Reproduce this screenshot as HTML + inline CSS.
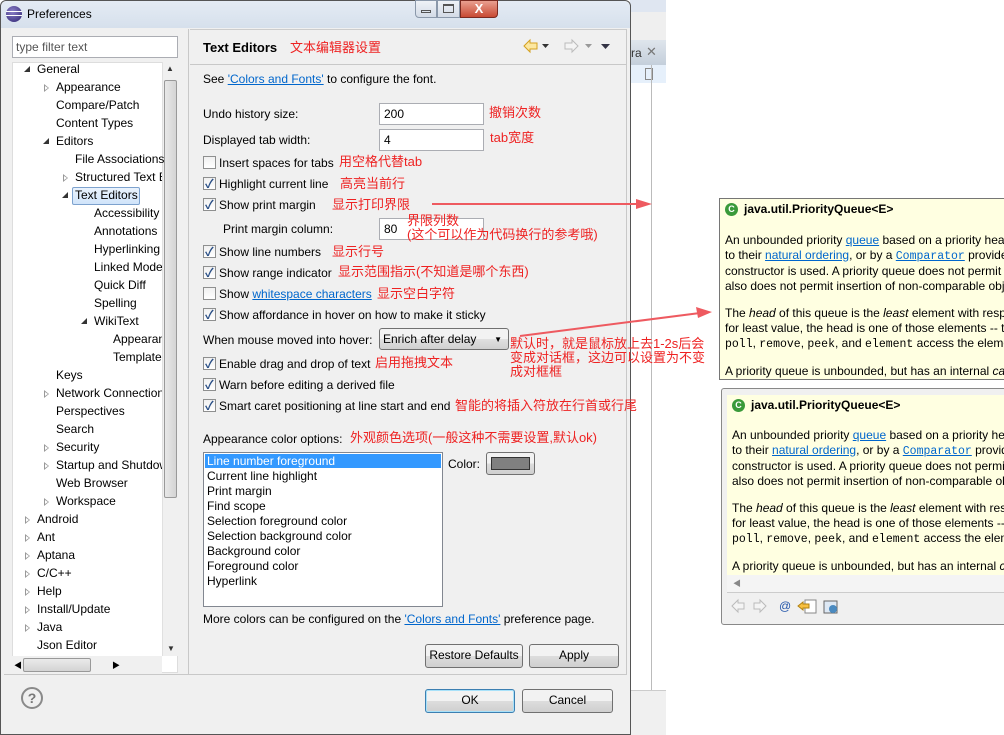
<!DOCTYPE html>
<html><head><meta charset="utf-8"><style>
*{margin:0;padding:0;box-sizing:border-box}
body{width:1004px;height:735px;position:relative;overflow:hidden;background:#fff;font-family:"Liberation Sans","Noto Sans CJK SC",sans-serif;font-size:12px;color:#000}
.a{position:absolute;white-space:nowrap}
.r{position:absolute;white-space:nowrap;color:#ee2222;font-family:"Liberation Sans","Noto Sans CJK SC",sans-serif;font-size:13px;line-height:14px}
.t{position:absolute;white-space:nowrap;line-height:14px}
.tri{position:absolute;width:0;height:0}
.op{border-left:5px solid #999;border-top:4px solid transparent;border-bottom:4px solid transparent}
.op:after{content:"";position:absolute;left:-4px;top:-2px;border-left:3px solid #fff;border-top:2px solid transparent;border-bottom:2px solid transparent}
.ex{border-right:6px solid #333;border-top:6px solid transparent}
.cb{position:absolute;width:13px;height:13px;border:1px solid #8e8f8f;background:linear-gradient(#f0f0f0,#fff)}
.cb.on:after{content:"✓";position:absolute;left:1px;top:-3px;font-size:12px;color:#2a4f86;font-weight:bold}
.in{position:absolute;background:#fff;border:1px solid #abadb3;padding:3px 4px;line-height:14px}
.btn{position:absolute;border:1px solid #707070;border-radius:3px;background:linear-gradient(#f2f2f2 50%,#dddddd 50%,#cfcfcf);text-align:center;line-height:21px}
a,.lk{color:#0066cc;text-decoration:underline}
.tip{position:absolute;background:#ffffe1;font-size:12px;line-height:15px;overflow:hidden}
.tip p{white-space:nowrap;margin-bottom:12px}
.mono{font-family:"Liberation Mono",monospace;font-size:11.5px}
</style></head><body>

<div class="a" style="left:630px;top:0;width:36px;height:12px;background:#dfe6f1"></div>
<div class="a" style="left:630px;top:12px;width:36px;height:28px;background:#efefef"></div>
<div class="a" style="left:630px;top:40px;width:36px;height:25px;background:linear-gradient(#dfe5ec,#c4cfdb)"></div>
<div class="a" style="left:631px;top:46px;color:#333">ra</div>
<div class="a" style="left:646px;top:44px;color:#777;font-size:13px">✕</div>
<div class="a" style="left:630px;top:65px;width:36px;height:18px;background:#e6f0fb"></div>
<div class="a" style="left:645px;top:68px;width:8px;height:12px;border:1px solid #888"></div>
<div class="a" style="left:651px;top:65px;width:1px;height:625px;background:#bbb"></div>
<div class="a" style="left:630px;top:690px;width:36px;height:45px;background:#f0f0f0;border-top:1px solid #ccc"></div>

<div class="a" style="left:0;top:0;width:631px;height:735px;background:#f0f0f0;border:1px solid #555;border-radius:6px 6px 0 0"></div>
<div class="a" style="left:1px;top:1px;width:629px;height:27px;background:linear-gradient(#e4ebf4,#d6e0ec);border-radius:6px 6px 0 0"></div>
<div class="a" style="left:6px;top:6px;width:16px;height:16px;border-radius:50%;background:radial-gradient(circle at 40% 35%,#8b7fc8,#2c2270)"></div>
<div class="a" style="left:6px;top:11px;width:16px;height:1px;background:#fff"></div>
<div class="a" style="left:6px;top:15px;width:16px;height:1px;background:#fff"></div>
<div class="a" style="left:27px;top:7px;font-size:12px">Preferences</div>
<div class="a" style="left:415px;top:0;width:22px;height:18px;border:1px solid #8a98aa;border-radius:0 0 0 4px;background:linear-gradient(#eef2f7,#d3dbe6)"></div>
<div class="a" style="left:421px;top:10px;width:10px;height:3px;border:1px solid #555"></div>
<div class="a" style="left:437px;top:0;width:23px;height:18px;border:1px solid #8a98aa;background:linear-gradient(#eef2f7,#d3dbe6)"></div>
<div class="a" style="left:443px;top:4px;width:11px;height:9px;border:1px solid #555;border-top-width:2px"></div>
<div class="a" style="left:460px;top:0;width:38px;height:18px;border:1px solid #7a2a20;border-radius:0 0 4px 0;background:linear-gradient(#e9a090,#c84a34);color:#fff;text-align:center;font-weight:bold;line-height:16px;font-size:13px">X</div>

<div class="in" style="left:12px;top:36px;width:166px;height:22px;padding:3px 3px;color:#555">type filter text</div>
<div class="a" style="left:12px;top:62px;width:166px;height:611px;background:#fff;border:1px solid #ddd"></div>
<div class="a" style="left:162px;top:62px;width:16px;height:594px;background:#f0f0f0;border-left:1px solid #e0e0e0"></div>
<div class="a" style="left:164px;top:80px;width:13px;height:418px;border:1px solid #999;border-radius:2px;background:linear-gradient(90deg,#e8e8e8,#d4d4d4)"></div>
<div class="a" style="left:166px;top:64px;font-size:8px;color:#333">▲</div>
<div class="a" style="left:167px;top:644px;font-size:8px;color:#333">▼</div>
<div class="a" style="left:12px;top:656px;width:150px;height:17px;background:#f0f0f0"></div>
<div class="a" style="left:23px;top:658px;width:68px;height:14px;border:1px solid #999;border-radius:2px;background:linear-gradient(#eaeaea,#d4d4d4)"></div>
<div class="a" style="left:14px;top:660px;font-size:8px">◀</div>
<div class="a" style="left:112px;top:660px;font-size:8px">▶</div>
<div class="a" style="left:188px;top:29px;width:1px;height:645px;background:#c8c8c8"></div>

<div class="tri ex" style="left:24px;top:66px"></div><div class="t" style="left:37px;top:62px">General</div>
<div class="tri op" style="left:44px;top:84px"></div><div class="t" style="left:56px;top:80px">Appearance</div>
<div class="t" style="left:56px;top:98px">Compare/Patch</div>
<div class="t" style="left:56px;top:116px">Content Types</div>
<div class="tri ex" style="left:43px;top:138px"></div><div class="t" style="left:56px;top:134px">Editors</div>
<div class="t" style="left:75px;top:152px">File Associations</div>
<div class="tri op" style="left:63px;top:174px"></div><div class="t" style="left:75px;top:170px;width:87px;overflow:hidden">Structured Text Editors</div>
<div class="tri ex" style="left:62px;top:192px"></div>
<div class="a" style="left:72px;top:187px;width:68px;height:18px;border:1px solid #7da2ce;border-radius:2px;background:linear-gradient(#eaf3fd,#d0e4fa)"></div>
<div class="t" style="left:75px;top:188px">Text Editors</div>
<div class="t" style="left:94px;top:206px">Accessibility</div>
<div class="t" style="left:94px;top:224px">Annotations</div>
<div class="t" style="left:94px;top:242px;width:68px;overflow:hidden">Hyperlinking</div>
<div class="t" style="left:94px;top:260px;width:68px;overflow:hidden">Linked Mode</div>
<div class="t" style="left:94px;top:278px">Quick Diff</div>
<div class="t" style="left:94px;top:296px">Spelling</div>
<div class="tri ex" style="left:81px;top:318px"></div><div class="t" style="left:94px;top:314px">WikiText</div>
<div class="t" style="left:113px;top:332px;width:49px;overflow:hidden">Appearance</div>
<div class="t" style="left:113px;top:350px;width:49px;overflow:hidden">Templates</div>
<div class="t" style="left:56px;top:368px">Keys</div>
<div class="tri op" style="left:44px;top:390px"></div><div class="t" style="left:56px;top:386px;width:106px;overflow:hidden">Network Connections</div>
<div class="t" style="left:56px;top:404px">Perspectives</div>
<div class="t" style="left:56px;top:422px">Search</div>
<div class="tri op" style="left:44px;top:444px"></div><div class="t" style="left:56px;top:440px">Security</div>
<div class="tri op" style="left:44px;top:462px"></div><div class="t" style="left:56px;top:458px;width:106px;overflow:hidden">Startup and Shutdown</div>
<div class="t" style="left:56px;top:476px">Web Browser</div>
<div class="tri op" style="left:44px;top:498px"></div><div class="t" style="left:56px;top:494px">Workspace</div>
<div class="tri op" style="left:25px;top:516px"></div><div class="t" style="left:37px;top:512px">Android</div>
<div class="tri op" style="left:25px;top:534px"></div><div class="t" style="left:37px;top:530px">Ant</div>
<div class="tri op" style="left:25px;top:552px"></div><div class="t" style="left:37px;top:548px">Aptana</div>
<div class="tri op" style="left:25px;top:570px"></div><div class="t" style="left:37px;top:566px">C/C++</div>
<div class="tri op" style="left:25px;top:588px"></div><div class="t" style="left:37px;top:584px">Help</div>
<div class="tri op" style="left:25px;top:606px"></div><div class="t" style="left:37px;top:602px">Install/Update</div>
<div class="tri op" style="left:25px;top:624px"></div><div class="t" style="left:37px;top:620px">Java</div>
<div class="t" style="left:37px;top:638px">Json Editor</div>

<div class="a" style="left:190px;top:29px;width:437px;height:36px;background:#f0f0f0;border-top:1px solid #ccc;border-bottom:1px solid #c8c8c8"></div>
<div class="a" style="left:626px;top:29px;width:1px;height:645px;background:#c8c8c8"></div>
<div class="a" style="left:203px;top:40px;font-size:13px;font-weight:bold">Text Editors</div>
<div class="r" style="left:290px;top:41px">文本编辑器设置</div>
<svg class="a" style="left:522px;top:38px" width="95" height="16">
<path d="M2 8 L8 2 L8 5 L15 5 L15 11 L8 11 L8 14 Z" fill="#fce7a0" stroke="#d4a020"/>
<path d="M20 6 L27 6 L23.5 10Z" fill="#333"/>
<path d="M56 8 L50 2 L50 5 L43 5 L43 11 L50 11 L50 14 Z" fill="#f4f4f4" stroke="#bbb"/>
<path d="M63 6 L70 6 L66.5 10Z" fill="#999"/>
<path d="M79 6 L88 6 L83.5 11Z" fill="#334"/>
</svg>
<div class="a" style="left:203px;top:72px">See <span class="lk">'Colors and Fonts'</span> to configure the font.</div>

<div class="a" style="left:203px;top:107px">Undo history size:</div>
<div class="in" style="left:379px;top:103px;width:105px;height:22px">200</div>
<div class="r" style="left:489px;top:106px">撤销次数</div>
<div class="a" style="left:203px;top:133px">Displayed tab width:</div>
<div class="in" style="left:379px;top:129px;width:105px;height:22px">4</div>
<div class="r" style="left:490px;top:131px">tab宽度</div>

<div class="cb" style="left:203px;top:156px"></div><div class="a" style="left:219px;top:156px">Insert spaces for tabs</div><div class="r" style="left:339px;top:155px">用空格代替tab</div>
<div class="cb on" style="left:203px;top:177px"></div><div class="a" style="left:219px;top:177px">Highlight current line</div><div class="r" style="left:340px;top:177px">高亮当前行</div>
<div class="cb on" style="left:203px;top:198px"></div><div class="a" style="left:219px;top:198px">Show print margin</div><div class="r" style="left:332px;top:198px">显示打印界限</div>
<div class="a" style="left:223px;top:222px">Print margin column:</div>
<div class="in" style="left:379px;top:218px;width:105px;height:22px">80</div>
<div class="r" style="left:407px;top:214px">界限列数</div>
<div class="r" style="left:407px;top:228px">(这个可以作为代码换行的参考哦)</div>
<div class="cb on" style="left:203px;top:245px"></div><div class="a" style="left:219px;top:245px">Show line numbers</div><div class="r" style="left:332px;top:245px">显示行号</div>
<div class="cb on" style="left:203px;top:266px"></div><div class="a" style="left:219px;top:266px">Show range indicator</div><div class="r" style="left:338px;top:265px">显示范围指示(不知道是哪个东西)</div>
<div class="cb" style="left:203px;top:287px"></div><div class="a" style="left:219px;top:287px">Show <span class="lk">whitespace characters</span></div><div class="r" style="left:377px;top:287px">显示空白字符</div>
<div class="cb on" style="left:203px;top:308px"></div><div class="a" style="left:219px;top:308px">Show affordance in hover on how to make it sticky</div>
<div class="a" style="left:203px;top:333px">When mouse moved into hover:</div>
<div class="a" style="left:379px;top:328px;width:130px;height:22px;border:1px solid #707070;border-radius:3px;background:linear-gradient(#f2f2f2 50%,#e0e0e0 50%,#d0d0d0);padding:3px 3px;line-height:14px">Enrich after delay<span style="position:absolute;right:6px;top:4px;font-size:8px">▼</span></div>
<div class="r" style="left:510px;top:337px;line-height:14px">默认时，就是鼠标放上去1-2s后会<br>变成对话框，这边可以设置为不变<br>成对框框</div>
<div class="cb on" style="left:203px;top:357px"></div><div class="a" style="left:219px;top:357px">Enable drag and drop of text</div><div class="r" style="left:375px;top:356px">启用拖拽文本</div>
<div class="cb on" style="left:203px;top:378px"></div><div class="a" style="left:219px;top:378px">Warn before editing a derived file</div>
<div class="cb on" style="left:203px;top:399px"></div><div class="a" style="left:219px;top:399px">Smart caret positioning at line start and end</div><div class="r" style="left:455px;top:399px">智能的将插入符放在行首或行尾</div>

<div class="a" style="left:203px;top:432px">Appearance color options:</div><div class="r" style="left:350px;top:431px">外观颜色选项(一般这种不需要设置,默认ok)</div>
<div class="a" style="left:203px;top:452px;width:240px;height:155px;background:#fff;border:1px solid #828790"></div>
<div class="a" style="left:205px;top:454px;width:236px;height:14px;background:#3399ff"></div>
<div class="a" style="left:207px;top:454px;line-height:15px;color:#fff">Line number foreground</div>
<div class="a" style="left:207px;top:469px;line-height:15px">Current line highlight<br>Print margin<br>Find scope<br>Selection foreground color<br>Selection background color<br>Background color<br>Foreground color<br>Hyperlink</div>
<div class="a" style="left:448px;top:457px">Color:</div>
<div class="btn" style="left:486px;top:452px;width:49px;height:23px"></div>
<div class="a" style="left:491px;top:457px;width:39px;height:13px;background:#808080;border:1px solid #333"></div>
<div class="a" style="left:203px;top:612px">More colors can be configured on the <span class="lk">'Colors and Fonts'</span> preference page.</div>
<div class="btn" style="left:425px;top:644px;width:98px;height:24px">Restore Defaults</div>
<div class="btn" style="left:529px;top:644px;width:90px;height:24px">Apply</div>

<div class="a" style="left:4px;top:674px;width:623px;height:1px;background:#c8c8c8"></div>
<div class="a" style="left:21px;top:687px;width:22px;height:22px;border:2px solid #8a8a8a;border-radius:50%;text-align:center;font-weight:bold;color:#777;line-height:18px;font-size:14px">?</div>
<div class="btn" style="left:425px;top:689px;width:90px;height:24px;border-color:#3c7fb1;box-shadow:inset 0 0 0 1px #a8e1f9">OK</div>
<div class="btn" style="left:522px;top:689px;width:91px;height:24px">Cancel</div>

<div class="tip" style="left:719px;top:198px;width:290px;height:182px;border:1px solid #767676">
<div class="a" style="left:5px;top:4px;width:13px;height:13px;border-radius:50%;background:#3a9a3a;color:#fff;font-size:9px;font-weight:bold;text-align:center;line-height:13px">C</div>
<div class="a" style="left:24px;top:3px;font-weight:bold">java.util.PriorityQueue&lt;E&gt;</div>
<div class="a" style="left:5px;top:34px">
<p>An unbounded priority <span class="lk">queue</span> based on a priority heap. The elements<br>to their <span class="lk">natural ordering</span>, or by a <span class="lk mono">Comparator</span> provided at<br>constructor is used. A priority queue does not permit null elements.<br>also does not permit insertion of non-comparable objects</p>
<p>The <i>head</i> of this queue is the <i>least</i> element with respect to<br>for least value, the head is one of those elements -- ties are<br><span class="mono">poll</span>, <span class="mono">remove</span>, <span class="mono">peek</span>, and <span class="mono">element</span> access the element</p>
<p>A priority queue is unbounded, but has an internal <i>capacity</i></p></div>
</div>

<div class="a" style="left:721px;top:388px;width:290px;height:237px;background:#f0f0f0;border:1px solid #888;border-radius:3px"></div>
<div class="tip" style="left:727px;top:395px;width:280px;height:180px">
<div class="a" style="left:5px;top:4px;width:13px;height:13px;border-radius:50%;background:#3a9a3a;color:#fff;font-size:9px;font-weight:bold;text-align:center;line-height:13px">C</div>
<div class="a" style="left:24px;top:3px;font-weight:bold">java.util.PriorityQueue&lt;E&gt;</div>
<div class="a" style="left:5px;top:33px">
<p>An unbounded priority <span class="lk">queue</span> based on a priority heap. The elements<br>to their <span class="lk">natural ordering</span>, or by a <span class="lk mono">Comparator</span> provided at<br>constructor is used. A priority queue does not permit null elements.<br>also does not permit insertion of non-comparable objects</p>
<p>The <i>head</i> of this queue is the <i>least</i> element with respect to<br>for least value, the head is one of those elements -- ties are<br><span class="mono">poll</span>, <span class="mono">remove</span>, <span class="mono">peek</span>, and <span class="mono">element</span> access the element</p>
<p>A priority queue is unbounded, but has an internal <i>capacity</i></p></div>
</div>
<div class="a" style="left:727px;top:575px;width:280px;height:17px;background:#f4f4f4"></div>
<div class="a" style="left:733px;top:578px;font-size:8px;color:#888">◀</div>
<div class="a" style="left:727px;top:592px;width:280px;height:1px;background:#ccc"></div>
<svg class="a" style="left:730px;top:597px" width="115" height="18">
<path d="M2 9 L8 3 L8 6 L14 6 L14 12 L8 12 L8 15Z" fill="#f4f4f4" stroke="#bbb"/>
<path d="M36 9 L30 3 L30 6 L24 6 L24 12 L30 12 L30 15Z" fill="#f4f4f4" stroke="#bbb"/>
<text x="49" y="13" font-size="12" fill="#2255aa" font-family="Liberation Sans">@</text>
<rect x="75" y="3" width="11" height="13" fill="#fff" stroke="#888"/>
<path d="M68 9 L73 5 L73 7 L79 7 L79 11 L73 11 L73 13Z" fill="#f8c040" stroke="#b08010"/>
<rect x="94" y="4" width="13" height="12" fill="#dde8f4" stroke="#666"/>
<circle cx="103" cy="12" r="4" fill="#4a8ac0"/>
</svg>

<svg class="a" style="left:0;top:0" width="1004" height="735">
<line x1="432" y1="204" x2="640" y2="204" stroke="#ee5a60" stroke-width="2"/>
<path d="M652 204 L636 199 L636 209Z" fill="#ee5a60"/>
<line x1="520" y1="336" x2="700" y2="313" stroke="#ee5a60" stroke-width="2"/>
<path d="M712 312 L696 307 L698 318Z" fill="#ee5a60"/>
</svg>
</body></html>
